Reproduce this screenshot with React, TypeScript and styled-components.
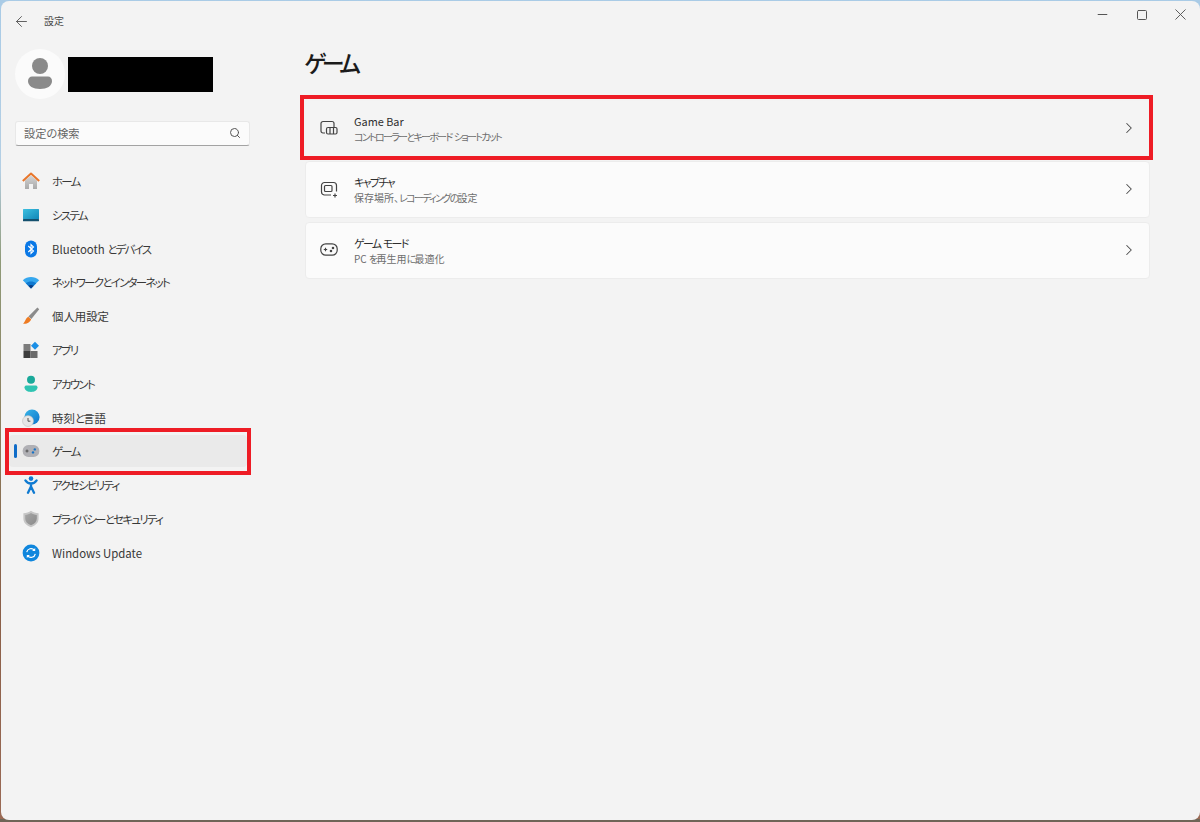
import React from 'react';
import styled, { createGlobalStyle } from 'styled-components';
import { ChevronRight, Search as SearchIcon, ArrowLeft, Minus, Square, X } from 'lucide-react';

const GlobalStyle = createGlobalStyle`
  html, body {
    margin: 0;
    padding: 0;
    height: 100%;
    overflow: hidden;
  }
  body {
    background:
      linear-gradient(#6f6557, #6f6557) bottom / 100% 3px no-repeat,
      linear-gradient(180deg, #a9cbe6 0, #b4cfe4 170px, #8f9a78 260px, #8c7f5e 420px, #8a5f48 600px, #9a6a55 822px);
    font-family: "Noto Sans CJK JP", "Noto Sans", sans-serif;
    font-feature-settings: "palt";
  }
`;

const Window = styled.div`
  position: relative;
  box-sizing: border-box;
  height: 819px;
  margin: 1px 0 0 1px;
  background: #f3f3f3;
  border-radius: 8px;
  display: flex;
  flex-direction: column;
  overflow: hidden;
`;

const TitleBar = styled.div`
  height: 40px;
  flex: none;
  display: flex;
  align-items: center;
  padding-left: 11.5px;
`;

const BackButton = styled.div`
  width: 17px;
  height: 17px;
  color: #555;
  display: flex;
  margin-right: 14.5px;
`;

const AppTitle = styled.div`
  font-size: 10px;
  color: #4a4a4a;
  flex: 1;
  padding-bottom: 1px;
`;

const WindowControls = styled.div`
  align-self: flex-start;
  height: 27px;
  display: flex;
  align-items: center;
  color: #555;
`;

const WindowControl = styled.div`
  width: 39px;
  display: flex;
  justify-content: center;
`;

const Body = styled.div`
  flex: 1;
  display: flex;
  min-height: 0;
`;

const Sidebar = styled.div`
  width: 250px;
  flex: none;
  box-sizing: border-box;
  padding: 8px 0 0 8px;
`;

const Profile = styled.div`
  display: flex;
  align-items: center;
  padding-left: 6px;
  gap: 3px;
  margin-bottom: 22px;
`;

const Avatar = styled.div`
  width: 50px;
  height: 50px;
  border-radius: 50%;
  background: #fbfbfb;
  display: flex;
  align-items: center;
  justify-content: center;
`;

const RedactedName = styled.div`
  width: 145px;
  height: 35px;
  background: #000;
`;

const SearchBox = styled.div`
  box-sizing: border-box;
  width: 235px;
  height: 25px;
  margin: 0 0 19px 6px;
  background: #fbfbfb;
  border: 1px solid #e8e8e8;
  border-bottom: 1px solid #a3a3a3;
  border-radius: 3px;
  display: flex;
  align-items: center;
  justify-content: space-between;
  padding: 0 8px 1px 8px;
  font-size: 11.2px;
  color: #666;
`;

// the kana of the original UI font is set much tighter than Noto's
const Kana = styled.span`
  letter-spacing: -0.145em;
`;

const NavList = styled.div`
  display: flex;
  flex-direction: column;
  gap: 1.8px;
`;

const NavItem = styled.div<{ $selected?: boolean }>`
  position: relative;
  width: 238px;
  height: 32px;
  box-sizing: border-box;
  padding-left: 13px;
  display: flex;
  align-items: center;
  gap: 12px;
  border-radius: 4px;
  background: ${props => (props.$selected ? '#eaeaea' : 'transparent')};
  font-size: 11.4px;
  color: #383838;

  ${props =>
    props.$selected &&
    `&::before {
      content: '';
      position: absolute;
      left: 5.4px;
      top: 9px;
      width: 2.4px;
      height: 14px;
      border-radius: 2px;
      background: #0f6cc8;
    }`}
`;

const NavIcon = styled.svg`
  width: 18px;
  height: 18px;
  flex: none;
`;

const Main = styled.div`
  flex: 1;
  padding: 0 50px 0 54px;
`;

const Heading = styled.h1`
  margin: 0 0 16.7px -1px;
  height: 42px;
  line-height: 42px;
  font-size: 23px;
  font-weight: 500;
  letter-spacing: -4.5px;
  color: #1b1b1b;
`;

const CardList = styled.div`
  display: flex;
  flex-direction: column;
  gap: 4px;
`;

const Card = styled.div<{ $hover?: boolean }>`
  box-sizing: border-box;
  height: 57px;
  padding: 0 11px 0 14px;
  display: flex;
  align-items: center;
  gap: 16px;
  border-radius: 4px;
  background: ${props => (props.$hover ? '#f4f4f4' : '#fbfbfb')};
  border: 1px solid ${props => (props.$hover ? '#f3f3f3' : '#ececec')};
  color: #444;
`;

const CardIcon = styled.svg`
  width: 18px;
  height: 18px;
  flex: none;
`;

const CardText = styled.div`
  flex: 1;
  display: flex;
  flex-direction: column;
  gap: 1px;
`;

const CardTitle = styled.div`
  font-size: 10.9px;
  line-height: 15px;
  color: #2e2e2e;
`;

const CardSub = styled.div`
  font-size: 10px;
  line-height: 13px;
  color: #6d6d6d;

  ${Kana} {
    letter-spacing: -0.17em;
  }
`;

// annotation boxes drawn on top of the screenshot
const RedFrame = styled.div<{ $x: number; $y: number; $w: number; $h: number }>`
  position: absolute;
  box-sizing: border-box;
  left: ${props => props.$x}px;
  top: ${props => props.$y}px;
  width: ${props => props.$w}px;
  height: ${props => props.$h}px;
  border: 4px solid #ee1c25;
  pointer-events: none;
`;

const Tight: React.FC<{ text: string }> = ({ text }) => (
  <>
    {text.split(/([\u3040-\u30ff]+)/).map((part, i) =>
      i % 2 === 1 ? <Kana key={i}>{part}</Kana> : part
    )}
  </>
);

const HomeIcon = () => (
  <NavIcon viewBox="0 0 18 18">
    <defs>
      <linearGradient id="homeWall" x1="0" y1="0" x2="0" y2="1">
        <stop offset="0" stopColor="#d4d4d4" />
        <stop offset="1" stopColor="#a9a9a9" />
      </linearGradient>
    </defs>
    <path d="M3 8.5 9 3.5l6 5V17h-4v-5H7v5H3z" fill="url(#homeWall)" />
    <path d="M.8 9 9 1.5 17.2 9" fill="none" stroke="#e8762b" strokeWidth="2" strokeLinejoin="round" />
  </NavIcon>
);

const SystemIcon = () => (
  <NavIcon viewBox="0 0 18 18">
    <defs>
      <linearGradient id="sysScreen" x1="0" y1="0" x2="1" y2="1">
        <stop offset="0" stopColor="#3cc0e0" />
        <stop offset="1" stopColor="#1287b8" />
      </linearGradient>
    </defs>
    <rect x="1" y="3" width="16" height="10" rx="0.6" fill="url(#sysScreen)" />
    <rect x="1" y="13" width="16" height="2.2" rx="0.5" fill="#14506e" />
  </NavIcon>
);

const BluetoothIcon = () => (
  <NavIcon viewBox="0 0 18 18">
    <rect x="3" y="0.5" width="12" height="17" rx="6" fill="#0a78e6" />
    <path d="M6.3 6 11.5 11 9 13.5v-9L11.5 7 6.3 12" fill="none" stroke="#fff" strokeWidth="1.1" />
  </NavIcon>
);

const WifiIcon = () => (
  <NavIcon viewBox="0 0 18 18">
    <path d="M.8 7.2C5.5 2.9 12.5 2.9 17.2 7.2L9 15.5z" fill="#35a7ee" />
    <path d="M3.8 10.2C6.8 7.8 11.2 7.8 14.2 10.2L9 15.5z" fill="#0f78cf" />
    <path d="M6.3 12.7C7.9 11.6 10.1 11.6 11.7 12.7L9 15.5z" fill="#0b3f86" />
  </NavIcon>
);

const BrushIcon = () => (
  <NavIcon viewBox="0 0 18 18">
    <path d="M15.400.6 17.200 2.200 9.400 12 6.400 9.600z" fill="#8b8b8b" />
    <path d="M6.300 9.800 9.100 12.200C8.300 15.200 4.500 17.400 1 16.600 3.400 15.200 3.200 11.200 6.300 9.800z" fill="#ee7b22" />
  </NavIcon>
);

const AppsIcon = () => (
  <NavIcon viewBox="0 0 18 18">
    <rect x="1.5" y="3" width="7" height="7" fill="#7c7c7c" />
    <rect x="1.5" y="10" width="7" height="7" fill="#3d3d3d" />
    <rect x="8.5" y="10" width="7" height="7" fill="#6a6a6a" />
    <path d="M13 .7 17 4.7 13 8.7 9 4.7z" fill="#1b8fe6" />
  </NavIcon>
);

const AccountIcon = () => (
  <NavIcon viewBox="0 0 18 18">
    <circle cx="9" cy="4.8" r="4" fill="#1aa99a" />
    <path d="M2.5 12.3C2.5 11 3.5 10.4 4.5 10.4h9c1 0 2 .6 2 1.900 0 3-3 4.700-6.500 4.700s-6.500-1.700-6.500-4.700z" fill="#2fc4b2" />
  </NavIcon>
);

const TimeIcon = () => (
  <NavIcon viewBox="0 0 18 18">
    <defs>
      <linearGradient id="timeGlobe" x1="0" y1="0" x2="1" y2="1">
        <stop offset="0" stopColor="#39b6e8" />
        <stop offset="1" stopColor="#0c74cc" />
      </linearGradient>
    </defs>
    <circle cx="10" cy="8" r="7.6" fill="url(#timeGlobe)" />
    <circle cx="6" cy="12" r="5.5" fill="#e6e6e6" stroke="#b9b9b9" strokeWidth="0.5" />
    <path d="M6 9v3.2h2.4" fill="none" stroke="#444" strokeWidth="0.9" />
  </NavIcon>
);

const GameIcon = () => (
  <NavIcon viewBox="0 0 18 18">
    <rect x="0.7" y="3" width="16.6" height="12" rx="5.6" fill="#b0b0b5" />
    <path d="M3.500 9h3M5 7.500v3" stroke="#4a4a4a" strokeWidth="0.9" />
    <circle cx="12.800" cy="7.400" r="1.200" fill="#1673c7" />
    <circle cx="11" cy="10.400" r="1.200" fill="#1673c7" />
  </NavIcon>
);

const AccessibilityIcon = () => (
  <NavIcon viewBox="0 0 18 18">
    <circle cx="9" cy="2.600" r="2.300" fill="#0f7ad1" />
    <path
      d="M3.400 4.400C5 7 7 7.500 9 7.500S13 7 14.600 4.400M9 7.500V11M9 10.500 6 16.800M9 10.500 12 16.800"
      fill="none"
      stroke="#0f7ad1"
      strokeWidth="2.300"
      strokeLinecap="round"
    />
  </NavIcon>
);

const ShieldIcon = () => (
  <NavIcon viewBox="0 0 18 18">
    <defs>
      <linearGradient id="shieldFace" x1="0" y1="0" x2="1" y2="1">
        <stop offset="0" stopColor="#a6a6a6" />
        <stop offset="1" stopColor="#8a8a8a" />
      </linearGradient>
    </defs>
    <path d="M9 .8C11 2.400 13.600 3 16.600 3.200v5.400c0 4.200-3 7-7.600 8.600C4.400 15.600 1.400 12.800 1.400 8.600V3.200C4.400 3 7 2.400 9 .8z" fill="#c6c6c6" />
    <path d="M9 3C10.800 4.200 12.600 4.800 14.800 5v3.600c0 3-2 5.200-5.800 6.600-3.800-1.400-5.800-3.600-5.800-6.600V5C5.400 4.800 7.200 4.200 9 3z" fill="url(#shieldFace)" />
  </NavIcon>
);

const UpdateIcon = () => (
  <NavIcon viewBox="0 0 18 18">
    <circle cx="9" cy="9" r="8.400" fill="#0f86dd" />
    <path d="M4.700 8.200A4.400 4.400 0 0 1 12.400 6.200M13.300 9.800A4.400 4.400 0 0 1 5.600 11.800" fill="none" stroke="#fff" strokeWidth="1.200" />
    <path d="M13.200 3.900v3.100h-3.100zM4.800 14.100v-3.100h3.100z" fill="#fff" />
  </NavIcon>
);

const navItems: { label: string; icon: React.ReactNode; selected?: boolean }[] = [
  { label: 'ホーム', icon: <HomeIcon /> },
  { label: 'システム', icon: <SystemIcon /> },
  { label: 'Bluetooth とデバイス', icon: <BluetoothIcon /> },
  { label: 'ネットワークとインターネット', icon: <WifiIcon /> },
  { label: '個人用設定', icon: <BrushIcon /> },
  { label: 'アプリ', icon: <AppsIcon /> },
  { label: 'アカウント', icon: <AccountIcon /> },
  { label: '時刻と言語', icon: <TimeIcon /> },
  { label: 'ゲーム', icon: <GameIcon />, selected: true },
  { label: 'アクセシビリティ', icon: <AccessibilityIcon /> },
  { label: 'プライバシーとセキュリティ', icon: <ShieldIcon /> },
  { label: 'Windows Update', icon: <UpdateIcon /> },
];

const GameBarGlyph = () => (
  <CardIcon viewBox="0 0 18 18" fill="none" stroke="#444" strokeWidth="1.2">
    <path d="M5 14H3A2 2 0 0 1 1 12V4.500A2 2 0 0 1 3 2.500h9A2 2 0 0 1 14 4.500V8.500" />
    <rect x="6.500" y="8.500" width="10.500" height="6.500" rx="1.500" />
    <path d="M10 8.500V15M13.500 8.500V15" />
  </CardIcon>
);

const CaptureGlyph = () => (
  <CardIcon viewBox="0 0 18 18" fill="none" stroke="#444" strokeWidth="1.2">
    <path d="M11 15H4.500A3 3 0 0 1 1.500 12V5.500A3 3 0 0 1 4.500 2.500h9A3 3 0 0 1 16.500 5.500V11.500" />
    <rect x="4.500" y="5.500" width="7.500" height="6" rx="1" />
    <path d="M15 13.500v4M13 15.500h4" />
  </CardIcon>
);

const ControllerGlyph = () => (
  <CardIcon viewBox="0 0 18 18" fill="none" stroke="#444" strokeWidth="1.2">
    <rect x="0.800" y="2.800" width="16.400" height="11.400" rx="5" />
    <path d="M3.800 8.500h3.400M5.500 6.800v3.400" />
    <circle cx="13" cy="7" r="0.700" fill="#444" />
    <circle cx="11" cy="10" r="0.700" fill="#444" />
  </CardIcon>
);

const cards = [
  { title: 'Game Bar', sub: 'コントローラーとキーボード ショートカット', icon: <GameBarGlyph />, hover: true },
  { title: 'キャプチャ', sub: '保存場所、レコーディングの設定', icon: <CaptureGlyph /> },
  { title: 'ゲーム モード', sub: 'PC を再生用に最適化', icon: <ControllerGlyph /> },
];

const App: React.FC = () => {
  return (
    <>
      <GlobalStyle />
      <Window>
        <TitleBar>
          <BackButton>
            <ArrowLeft size={17} strokeWidth={1.3} />
          </BackButton>
          <AppTitle>設定</AppTitle>
          <WindowControls>
            <WindowControl><Minus size={15} strokeWidth={1.6} /></WindowControl>
            <WindowControl><Square size={12} strokeWidth={2} /></WindowControl>
            <WindowControl><X size={19} strokeWidth={1.2} /></WindowControl>
          </WindowControls>
        </TitleBar>
        <Body>
          <Sidebar>
            <Profile>
              <Avatar>
                <svg width="26" height="32" viewBox="0 0 26 32">
                  <circle cx="13" cy="8" r="8" fill="#8a8a8a" />
                  <path d="M1 23c0-3 2-4.500 4-4.500h16c2 0 4 1.500 4 4.500 0 5-5 8-12 8S1 28 1 23z" fill="#8a8a8a" />
                </svg>
              </Avatar>
              <RedactedName />
            </Profile>
            <SearchBox>
              <span>設定の検索</span>
              <SearchIcon size={12} strokeWidth={2} color="#555" />
            </SearchBox>
            <NavList>
              {navItems.map(item => (
                <NavItem key={item.label} $selected={item.selected}>
                  {item.icon}
                  <span><Tight text={item.label} /></span>
                </NavItem>
              ))}
            </NavList>
          </Sidebar>
          <Main>
            <Heading>ゲーム</Heading>
            <CardList>
              {cards.map(card => (
                <Card key={card.title} $hover={card.hover}>
                  {card.icon}
                  <CardText>
                    <CardTitle><Tight text={card.title} /></CardTitle>
                    <CardSub><Tight text={card.sub} /></CardSub>
                  </CardText>
                  <ChevronRight size={18} strokeWidth={1.4} color="#4a4a4a" />
                </Card>
              ))}
            </CardList>
          </Main>
        </Body>
        <RedFrame $x={299} $y={94} $w={853} $h={64.5} />
        <RedFrame $x={4} $y={427.3} $w={245.7} $h={46.7} />
      </Window>
    </>
  );
};

export default App;
